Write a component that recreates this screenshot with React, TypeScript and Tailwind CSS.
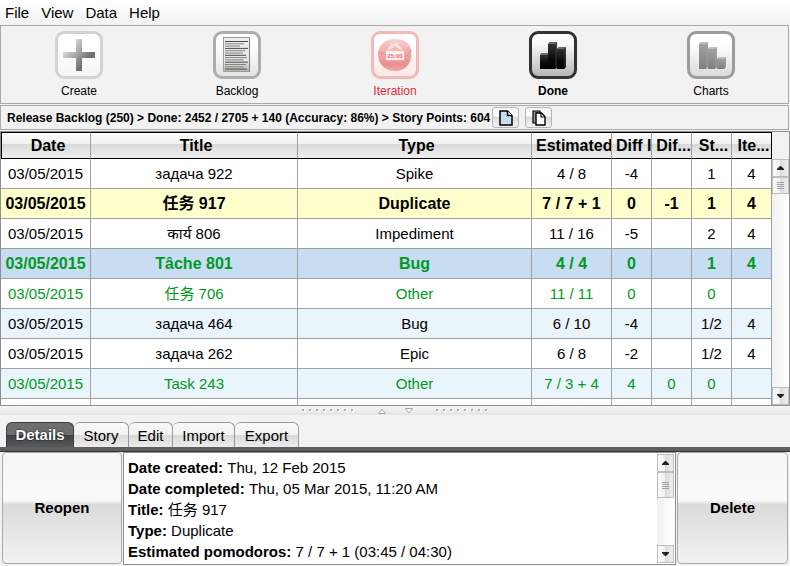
import React from "react";

const sans =
  "font-['Liberation_Sans','Noto_Sans_CJK_SC','Noto_Sans',sans-serif]";

const glossy =
  "bg-[linear-gradient(#f6f6f6_0%,#fafafa_43%,#dbdbdb_47%,#dedede_55%,#f3f3f3_100%)]";

type Tone = "plain" | "green" | "duplicate" | "selected" | "tinted" | "greenTinted";

const toneClass: Record<Tone, string> = {
  plain: "bg-white text-black text-[15px]",
  green: "bg-white text-[#009a22] text-[15px]",
  duplicate: "bg-[#ffffcc] text-black text-base font-bold",
  selected: "bg-[#c8dcf2] text-[#009a22] text-base font-bold",
  tinted: "bg-[#e9f4fb] text-black text-[15px]",
  greenTinted: "bg-[#e9f4fb] text-[#009a22] text-[15px]",
};

const rows: { tone: Tone; cells: string[] }[] = [
  { tone: "plain", cells: ["03/05/2015", "задача 922", "Spike", "4 / 8", "-4", "", "1", "4"] },
  { tone: "duplicate", cells: ["03/05/2015", "任务 917", "Duplicate", "7 / 7 + 1", "0", "-1", "1", "4"] },
  { tone: "plain", cells: ["03/05/2015", "कार्य 806", "Impediment", "11 / 16", "-5", "", "2", "4"] },
  { tone: "selected", cells: ["03/05/2015", "Tâche 801", "Bug", "4 / 4", "0", "", "1", "4"] },
  { tone: "green", cells: ["03/05/2015", "任务 706", "Other", "11 / 11", "0", "", "0", ""] },
  { tone: "tinted", cells: ["03/05/2015", "задача 464", "Bug", "6 / 10", "-4", "", "1/2", "4"] },
  { tone: "plain", cells: ["03/05/2015", "задача 262", "Epic", "6 / 8", "-2", "", "1/2", "4"] },
  { tone: "greenTinted", cells: ["03/05/2015", "Task 243", "Other", "7 / 3 + 4", "4", "0", "0", ""] },
  { tone: "plain", cells: ["", "", "", "", "", "", "", ""] },
];

const headers = ["Date", "Title", "Type", "Estimated", "Diff I", "Dif...", "St...", "Ite..."];

function Frame({ id, stroke, from, to, children }: { id: string; stroke: string; from: string; to: string; children: React.ReactNode }) {
  return (
    <svg width="48" height="48" viewBox="0 0 48 48" aria-hidden="true">
      <defs>
        <linearGradient id={id} x1="0" y1="0" x2="0" y2="1">
          <stop offset="0.25" stopColor={from} />
          <stop offset="1" stopColor={to} />
        </linearGradient>
      </defs>
      <rect x="1.5" y="1.5" width="45" height="45" rx="7.5" fill={`url(#${id})`} stroke={stroke} strokeWidth="3" />
      {children}
    </svg>
  );
}

function CreateIcon() {
  return (
    <Frame id="frameCreate" stroke="#d3d3d3" from="#ffffff" to="#f4f4f4">
      <defs>
        <linearGradient id="plus" x1="0" y1="0" x2="1" y2="0.9">
          <stop offset="0.15" stopColor="#e6e6e6" />
          <stop offset="0.5" stopColor="#a0a0a0" />
          <stop offset="0.75" stopColor="#6e6e6e" />
          <stop offset="1" stopColor="#858585" />
        </linearGradient>
      </defs>
      <path d="M21 8h6v13h13v6H27v13h-6V27H8v-6h13z" fill="url(#plus)" />
    </Frame>
  );
}

function BacklogIcon() {
  const ends = [35, 31, 27, 35, 32, 30, 33, 34, 31, 35, 33, 31, 34];
  return (
    <Frame id="frameBacklog" stroke="#adadad" from="#ffffff" to="#e3e3e3">
      <defs>
        <linearGradient id="sheet" x1="0" y1="0" x2="0" y2="1">
          <stop offset="0" stopColor="#eeeeec" />
          <stop offset="0.7" stopColor="#e4e4e0" />
          <stop offset="1" stopColor="#b5b5ae" />
        </linearGradient>
      </defs>
      <rect x="10.5" y="6.5" width="26" height="34" fill="url(#sheet)" stroke="#9c9c98" />
      <path d="M36.5 7v34" stroke="#7d7d7a" />
      {ends.map((end, i) => (
        <path key={i} d={`M12 ${10.5 + i * 2.3}H${end}`} stroke={i % 3 === 0 ? "#4a4a4a" : "#85857f"} strokeWidth="1" />
      ))}
    </Frame>
  );
}

function IterationIcon() {
  return (
    <Frame id="frameIteration" stroke="#f2b9b9" from="#ffffff" to="#fbe6e6">
      <defs>
        <linearGradient id="tomato" x1="0" y1="0" x2="0" y2="1">
          <stop offset="0" stopColor="#f8cfcf" />
          <stop offset="0.45" stopColor="#f0a8a8" />
          <stop offset="0.8" stopColor="#ea9090" />
          <stop offset="1" stopColor="#f0a6a6" />
        </linearGradient>
      </defs>
      <path d="M24 8.500c9-1.500 16.500 4 16.500 14C40.500 33 34 40 24.500 40S7 34 7 23.500C7 14 15 7 24 8.500z" fill="url(#tomato)" />
      <path d="M7.500 21c6 2 6 2 8 2M32 26c4-1 6.500-3 8-7" fill="none" stroke="#e88c8c" />
      <path d="M16 11c3-1 5 0 7 2l-1-5c2 0 3 2 3 4l7-2-5 4c2 1 4 3 5 5-4 0-6-2-8-4-1 2-4 4-8 4 1-2 2-4 4-5-1-2-2-3-4-3z" fill="#fbe2e2" stroke="#f0b4b4" strokeWidth="0.500" />
      <rect x="15" y="20" width="18" height="9" fill="#fdf0f0" stroke="#f7d4d4" strokeWidth="0.500" />
      <text x="24" y="27" textAnchor="middle" fontSize="6" fontWeight="bold" fill="#dd7070">
        25:00
      </text>
    </Frame>
  );
}

function DoneIcon() {
  return (
    <Frame id="frameDone" stroke="#333333" from="#fafafa" to="#b4b4b4">
      <defs>
        <linearGradient id="darkBar" x1="0" y1="0" x2="0" y2="1">
          <stop offset="0" stopColor="#3c3c3c" />
          <stop offset="0.6" stopColor="#0a0a0a" />
          <stop offset="1" stopColor="#000000" />
        </linearGradient>
      </defs>
      <path d="M11 24l2-2h6v16h-8z" fill="url(#darkBar)" />
      <path d="M19 13l2-2h7v26l-2 1h-7z" fill="url(#darkBar)" />
      <path d="M28 18l2-2h7v20l-2 2h-7z" fill="url(#darkBar)" />
      <path d="M11 24l2-2h6v2zM19 13l2-2h7l-2 2zM28 18l2-2h7l-2 2z" fill="#6b6b6b" />
      <path d="M27 13v24M36 18v18" stroke="#4a4a4a" strokeWidth="0.800" />
    </Frame>
  );
}

function ChartsIcon() {
  return (
    <Frame id="frameCharts" stroke="#9c9c9c" from="#ffffff" to="#d9d9d9">
      <defs>
        <linearGradient id="grayBar" x1="0" y1="0" x2="0" y2="1">
          <stop offset="0" stopColor="#a3a3a3" />
          <stop offset="1" stopColor="#7f7f7f" />
        </linearGradient>
      </defs>
      <path d="M12 13l2-2h7v25l-2 2h-7z" fill="url(#grayBar)" />
      <path d="M21 18l2-2h7v20l-2 2h-7z" fill="url(#grayBar)" />
      <path d="M30 28l2-2h7v10l-2 2h-7z" fill="url(#grayBar)" />
      <path d="M12 13l2-2h7l-2 2zM21 18l2-2h7l-2 2zM30 28l2-2h7l-2 2z" fill="#c0c0c0" />
      <path d="M20 13v24M29 18v19M38 28v8" stroke="#a0a0a0" strokeWidth="1" />
    </Frame>
  );
}

const tools = [
  { label: "Create", icon: <CreateIcon />, text: "text-black" },
  { label: "Backlog", icon: <BacklogIcon />, text: "text-black" },
  { label: "Iteration", icon: <IterationIcon />, text: "text-[#dd2c3c]" },
  { label: "Done", icon: <DoneIcon />, text: "text-black font-bold" },
  { label: "Charts", icon: <ChartsIcon />, text: "text-black" },
];

function Arrow({ up }: { up?: boolean }) {
  return (
    <svg width="7" height="4" viewBox="0 0 7 4" aria-hidden="true">
      <path d={up ? "M3 0h1l3 3v1H0V3z" : "M0 0h7v1L4 4H3L0 1z"} fill="#222222" />
    </svg>
  );
}

function ScrollBar({ thumb }: { thumb: string }) {
  const box =
    "flex w-full shrink-0 items-center justify-center border border-[#bdbdbd] bg-[linear-gradient(90deg,#fbfbfb_0%,#f0f0f0_45%,#dcdcdc_50%,#eeeeee_100%)]";
  return (
    <div className="flex min-h-0 w-[17px] flex-1 flex-col bg-[linear-gradient(90deg,#f1f1f1,#ffffff)]">
      <button type="button" aria-label="Scroll up" className={`${box} h-[18px]`}>
        <Arrow up />
      </button>
      <div className={`${box} ${thumb}`}>
        <svg width="7" height="7" viewBox="0 0 7 7" aria-hidden="true">
          <path d="M0 .5h7M0 2.500h7M0 4.500h7M0 6.500h7" stroke="#a0a0a0" />
        </svg>
      </div>
      <div className="flex-1" />
      <button type="button" aria-label="Scroll down" className={`${box} h-[18px]`}>
        <Arrow />
      </button>
    </div>
  );
}

function Dots() {
  return (
    <svg width="53" height="3" viewBox="0 0 53 3" aria-hidden="true">
      {[0, 7, 14, 21, 28, 35, 42, 49].map((x) => (
        <g key={x}>
          <rect x={x + 1} y="1" width="2" height="2" fill="#ffffff" />
          <rect x={x} y="0" width="2" height="2" fill="#acacac" />
        </g>
      ))}
    </svg>
  );
}

function DetailLine({ label, value }: { label: string; value: string }) {
  return (
    <div className="h-[21px] whitespace-nowrap leading-[21px]">
      <dt className="inline font-bold">{label}</dt> <dd className="inline">{value}</dd>
    </div>
  );
}

export default function App() {
  return (
    <div className={`${sans} flex h-screen flex-col overflow-hidden bg-[#f2f2f2] text-[15px] text-black`}>
      <nav className="flex h-[25px] shrink-0 items-center gap-3 bg-linear-to-b from-white to-[#f2f2f2] pl-[5px]">
        {["File", "View", "Data", "Help"].map((item) => (
          <button key={item} type="button" className="leading-5">
            {item}
          </button>
        ))}
      </nav>

      <div className="mr-px h-[79px] shrink-0 border border-[#a9a9a9]">
        <div className="-ml-px -mr-0.5 grid grid-cols-5">
          {tools.map((tool) => (
            <button key={tool.label} type="button" className={`flex flex-col items-center pt-[5px] text-xs ${tool.text}`}>
              {tool.icon}
              <span className="mt-1 leading-4">{tool.label}</span>
            </button>
          ))}
        </div>
      </div>

      <div className="my-px mr-px flex h-[25px] shrink-0 items-center border border-[#a9a9a9] pl-1.5">
        <span className="whitespace-nowrap text-xs font-bold">
          Release Backlog (250) &gt; Done: 2452 / 2705 + 140 (Accuracy: 86%) &gt; Story Points: 604
        </span>
        <div className="ml-0.5 flex gap-1.5">
          <button type="button" aria-label="Copy" className={`flex h-[21px] w-[27px] items-center justify-center rounded-[3px] border border-[#b5b5b5] ${glossy}`}>
            <svg width="14" height="16" viewBox="0 0 14 16" aria-hidden="true">
              <path d="M1 1h7.500L13 5.500V15H1z" fill="#c8dcf2" stroke="#000000" strokeWidth="1.500" />
              <path d="M8.500 1v4.500H13" fill="#ffffff" stroke="#000000" strokeWidth="1.500" />
            </svg>
          </button>
          <button type="button" aria-label="Copy all" className={`flex h-[21px] w-[27px] items-center justify-center rounded-[3px] border border-[#b5b5b5] ${glossy}`}>
            <svg width="14" height="16" viewBox="0 0 14 16" aria-hidden="true">
              <path d="M1 1h7v12H1z" fill="#999999" stroke="#000000" strokeWidth="1.200" />
              <path d="M4 3h5.500L13 6.500V15H4z" fill="#ffffff" stroke="#000000" strokeWidth="1.400" />
              <path d="M9 3v4h4" fill="none" stroke="#000000" strokeWidth="1.200" />
            </svg>
          </button>
        </div>
      </div>

      <div className="flex min-h-0 flex-1 overflow-hidden border border-[#8f8f8f]">
        <div className="min-w-0 flex-1 overflow-hidden bg-white">
          <table className="w-full table-fixed border-separate border-spacing-0 text-center">
            <colgroup>
              <col className="w-[90px]" />
              <col className="w-[207px]" />
              <col />
              <col className="w-20" />
              <col className="w-10" />
              <col className="w-10" />
              <col className="w-10" />
              <col className="w-10" />
            </colgroup>
            <thead>
              <tr>
                {headers.map((header) => (
                  <th
                    key={header}
                    scope="col"
                    className="h-[27px] overflow-hidden whitespace-nowrap border-y border-r border-y-black border-r-[#a0a0a0] bg-[linear-gradient(#fdfdfd_0%,#f0f0f0_42%,#dadada_46%,#efefef_100%)] py-0 pl-1 pr-0 text-base leading-6 first:border-l first:border-l-black last:border-r-black"
                  >
                    {header}
                  </th>
                ))}
              </tr>
            </thead>
            <tbody>
              {rows.map((row, r) => (
                <tr key={r} className={toneClass[row.tone]}>
                  {row.cells.map((cell, c) => (
                    <td key={c} className="h-[30px] whitespace-nowrap border-b border-r border-[#a0a0a0] p-0 leading-6">
                      {cell}
                    </td>
                  ))}
                </tr>
              ))}
            </tbody>
          </table>
        </div>
        <div className="flex w-[17px] shrink-0 flex-col pt-[27px]">
          <ScrollBar thumb="h-[17px]" />
        </div>
      </div>

      <div className="flex h-[9px] shrink-0 items-center justify-center gap-[23px] bg-linear-to-b from-[#f6f6f6] to-[#e4e4e4]">
        <Dots />
        <svg width="35" height="6" viewBox="0 0 35 6" aria-hidden="true">
          <path d="M.5 5.500h7L4 1zM27.500.500h7L31 5z" fill="#ffffff" stroke="#a9a9a9" />
        </svg>
        <Dots />
      </div>

      <div className="mt-[7px] flex h-[25px] shrink-0 pl-[6px]">
        <button type="button" className="w-[68px] rounded-t-md border border-b-0 border-[#3c3c3c] bg-[linear-gradient(#6c6e70_0%,#6c6e70_48%,#404244_52%,#58595b_100%)] font-bold leading-6 text-white [text-shadow:0_0_2px_#000000]">
          Details
        </button>
        {[
          ["Story", "w-[55px]"],
          ["Edit", "w-11"],
          ["Import", "w-[62px]"],
          ["Export", "w-16"],
        ].map(([tab, width]) => (
          <button
            key={tab}
            type="button"
            className={`${width} rounded-t-md border border-b-0 border-l-0 border-[#999999] bg-[linear-gradient(#f9f9f9_0%,#f2f2f2_48%,#dadada_52%,#ececec_100%)] pt-px leading-6`}
          >
            {tab}
          </button>
        ))}
      </div>
      <div className="h-[5px] shrink-0 border-b border-[#333333] bg-[#5e605f]" />

      <div className="flex h-[114px] shrink-0 gap-px bg-[#f2f2f2] pb-px pl-0.5 pr-0.5">
        <button type="button" className={`h-[112px] w-[120px] shrink-0 rounded-[4px] border border-[#aaaaaa] font-bold ${glossy}`}>
          Reopen
        </button>
        <div className="flex min-w-0 flex-1 border border-[#8f8f8f] bg-white">
          <dl className="min-w-0 flex-1 overflow-hidden pl-1 pt-1">
            <DetailLine label="Date created:" value="Thu, 12 Feb 2015" />
            <DetailLine label="Date completed:" value="Thu, 05 Mar 2015, 11:20 AM" />
            <DetailLine label="Title:" value="任务 917" />
            <DetailLine label="Type:" value="Duplicate" />
            <DetailLine label="Estimated pomodoros:" value="7 / 7 + 1 (03:45 / 04:30)" />
          </dl>
          <div className="flex w-[18px] shrink-0 flex-col pb-px pr-px pt-px">
            <ScrollBar thumb="h-[26px]" />
          </div>
        </div>
        <button type="button" className={`h-[112px] w-[111px] shrink-0 rounded-[4px] border border-[#aaaaaa] font-bold ${glossy}`}>
          Delete
        </button>
      </div>
    </div>
  );
}
